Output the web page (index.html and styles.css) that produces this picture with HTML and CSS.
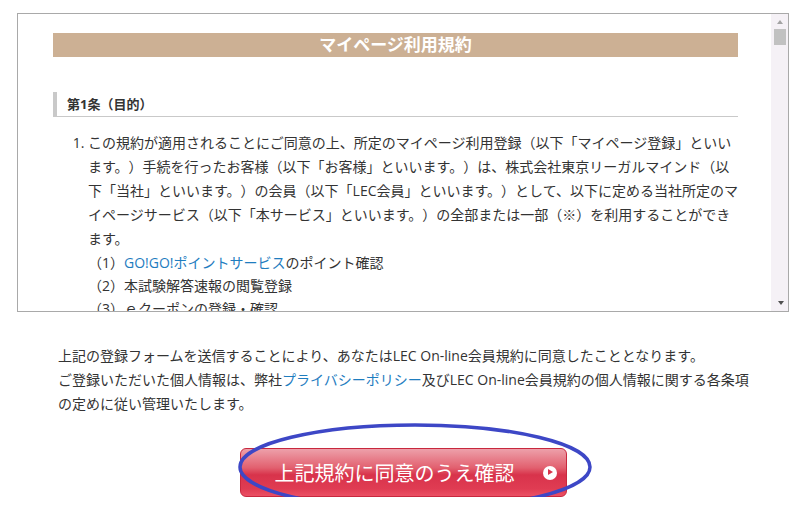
FILE: index.html
```html
<!DOCTYPE html>
<html lang="ja">
<head>
<meta charset="UTF-8">
<meta name="viewport" content="width=device-width, initial-scale=1.0">
<title>マイページ利用規約</title>
<link rel="stylesheet" href="styles.css">
</head>
<body>
    <div class="terms-box">
        <div class="terms-body">
            <h2 class="terms-title">マイページ利用規約</h2>
            <h3 class="article-title">第1条（目的）</h3>
            <ol class="article-list">
                <li>
                    <p class="article-text">この規約が適用されることにご同意の上、所定のマイページ利用登録（以下「マイページ登録」といい<br>ます。）手続を行ったお客様（以下「お客様」といいます。）は、株式会社東京リーガルマインド（以<br>下「当社」といいます。）の会員（以下「LEC会員」といいます。）として、以下に定める当社所定のマ<br>イページサービス（以下「本サービス」といいます。）の全部または一部（※）を利用することができ<br>ます。</p>
                    <ul class="sub-list">
                        <li>（1）<a href="#">GO!GO!ポイントサービス</a>のポイント確認</li>
                        <li>（2）本試験解答速報の閲覧登録</li>
                        <li>（3）ｅクーポンの登録・確認</li>
                        <li>（4）各種お申込み履歴の確認</li>
                    </ul>
                </li>
            </ol>
        </div>
        <!-- スクロールバー -->
        <div class="scrollbar">
            <span class="scroll-arrow up"></span>
            <span class="scroll-thumb"></span>
            <span class="scroll-track"></span>
            <span class="scroll-arrow down"></span>
        </div>
    </div>

    <p class="notice">上記の登録フォームを送信することにより、あなたはLEC On-line会員規約に同意したこととなります。<br>ご登録いただいた個人情報は、弊社<a href="#">プライバシーポリシー</a>及びLEC On-line会員規約の個人情報に関する各条項<br>の定めに従い管理いたします。</p>

    <div class="submit-area">
        <button class="agree-btn" type="submit">上記規約に同意のうえ確認<span class="btn-icon"></span></button>
        <svg class="mark" width="356" height="92" viewBox="0 0 356 92">
            <ellipse cx="178" cy="46" rx="175" ry="42" fill="none" stroke="#3d47c6" stroke-width="3.5"/>
        </svg>
    </div>
</body>
</html>
```

FILE: styles.css
```css
body {
    margin: 0;
    padding: 0;
    font-family: "Open Sans", "Noto Sans CJK JP", sans-serif;
    font-size: 14px;
    color: #333;
    background: #fff;
    text-spacing-trim: space-all;
}
a {
    color: #1f7dbf;
    text-decoration: none;
}

.terms-box {
    display: flex;
    height: 299px;
    margin: 13px 11px 0 17px;
    border: 1px solid #a9a9a9;
    box-sizing: border-box;
}
.terms-body {
    flex: 1;
    overflow: hidden;
    padding: 19px 33px 0 35px;
}
.terms-title {
    margin: 0;
    height: 24px;
    line-height: 24px;
    background: #ccb094;
    color: #fff;
    font-size: 17px;
    font-weight: bold;
    text-align: center;
}
.article-title {
    margin: 35px 0 0;
    height: 24px;
    line-height: 24px;
    padding-left: 10px;
    border-left: 4px solid #c9c9c9;
    border-bottom: 1px solid #c9c9c9;
    font-size: 13px;
    font-weight: bold;
}
.article-list {
    margin: 14px 0 0;
    padding-left: 35px;
}
.article-text {
    margin: 0;
    line-height: 24px;
    white-space: nowrap;
}
.sub-list {
    margin: 0;
    padding: 0;
    list-style: none;
    line-height: 23px;
}

/* スクロールバー */
.scrollbar {
    width: 17px;
    display: flex;
    flex-direction: column;
    background: #f5f1f6;
}
.scroll-arrow {
    height: 15px;
    display: flex;
    align-items: center;
    justify-content: center;
}
.scroll-arrow::before {
    content: "";
    border-left: 3.5px solid transparent;
    border-right: 3.5px solid transparent;
}
.scroll-arrow.up {
    padding-left: 1px;
}
.scroll-arrow.up::before {
    border-bottom: 4px solid #a3a3a3;
}
.scroll-arrow.down {
    height: 16px;
    padding-left: 2px;
}
.scroll-arrow.down::before {
    border-top: 4px solid #505050;
}
.scroll-thumb {
    height: 16px;
    margin: 0 2px 0 3px;
    background: #c1c1c1;
}
.scroll-track {
    flex: 1;
}

.notice {
    margin: 32px 0 0 58px;
    line-height: 24px;
}

.submit-area {
    position: relative;
    width: 327px;
    margin: 32px auto 0;
    padding-left: 6px;
}
.agree-btn {
    display: flex;
    align-items: center;
    width: 327px;
    height: 49px;
    padding: 0 0 0 34px;
    border: 1px solid #c8283e;
    border-radius: 6px;
    background: linear-gradient(#eda0aa 0%, #e2606f 40%, #d8334b 55%, #e03c53 85%, #eb5064 100%);
    color: #fff;
    font-family: "Noto Sans CJK JP", sans-serif;
    font-size: 20px;
    white-space: nowrap;
    box-sizing: border-box;
    cursor: pointer;
}
.btn-icon {
    position: relative;
    flex: none;
    width: 14px;
    height: 14px;
    margin-left: 28px;
    border-radius: 50%;
    background: #fff;
}
.btn-icon::after {
    content: "";
    position: absolute;
    left: 5px;
    top: 3.5px;
    border-top: 3.5px solid transparent;
    border-bottom: 3.5px solid transparent;
    border-left: 5px solid #d8334b;
}
.mark {
    position: absolute;
    left: 3px;
    top: -27px;
}
```
